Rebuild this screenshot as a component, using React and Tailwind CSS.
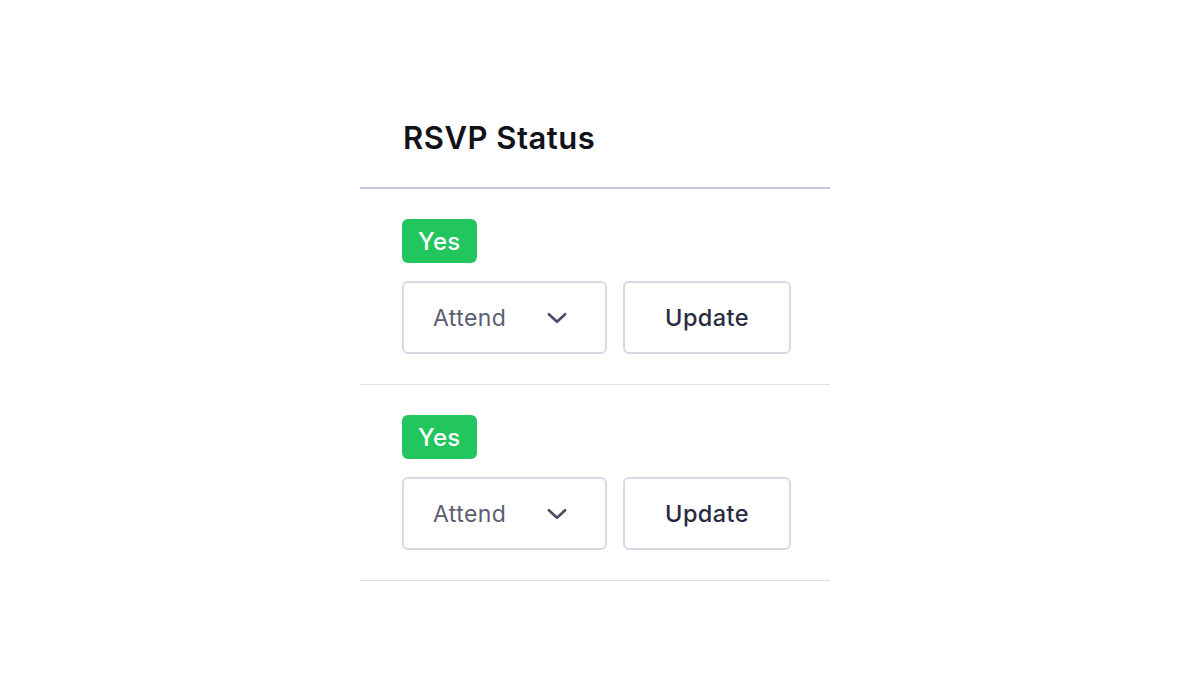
import React from "react";

const rows = [
    { id: 1, status: "Yes", choice: "Attend" },
    { id: 2, status: "Yes", choice: "Attend" },
];

const ChevronDown = () => (
    <svg width="26" height="26" viewBox="0 0 24 24" fill="none" stroke="#4b4b66" strokeWidth="2.4" strokeLinecap="round" strokeLinejoin="round">
        <path d="M4.5 8.5l7.5 7 7.5-7" />
    </svg>
);

const App = () => {
    return (
        <div className="w-[1190px] h-[686px] bg-white flex justify-center font-['Inter',sans-serif]">
            <div className="w-[470px] mt-[118px]">
                {/* Header */}
                <div className="px-[43px] pb-[29px] border-b-2 border-[#c3c7de]">
                    <h2 className="text-[31px] leading-[40px] font-semibold text-[#111318] tracking-[0.5px]">
                        RSVP Status
                    </h2>
                </div>

                {/* Rows */}
                {rows.map((row) => (
                    <div key={row.id} className="pl-[42px] pt-[30px] pb-[30px] border-b border-[#dfe0ec]">
                        <div className="w-fit flex items-center h-[44px] px-[16px] pt-[1px] rounded-[6px] bg-[#22c55e] text-white text-[24px] font-medium tracking-[0.3px]">
                            {row.status}
                        </div>
                        <div className="flex gap-[16px] mt-[18px]">
                            <button className="shrink-0 w-[205px] h-[73px] flex items-center justify-between pl-[29px] pr-[35px] pt-[1px] border-2 border-[#d8d9e6] rounded-[6px] text-[23px] tracking-[0.4px] text-[#5b5d70]">
                                {row.choice}
                                <ChevronDown />
                            </button>
                            <button className="shrink-0 w-[168px] h-[73px] pt-[1px] border-2 border-[#d8d9e6] rounded-[6px] text-[23.5px] tracking-[0.4px] font-medium text-[#2a2b40]">
                                Update
                            </button>
                        </div>
                    </div>
                ))}
            </div>
        </div>
    );
};

export default App;
